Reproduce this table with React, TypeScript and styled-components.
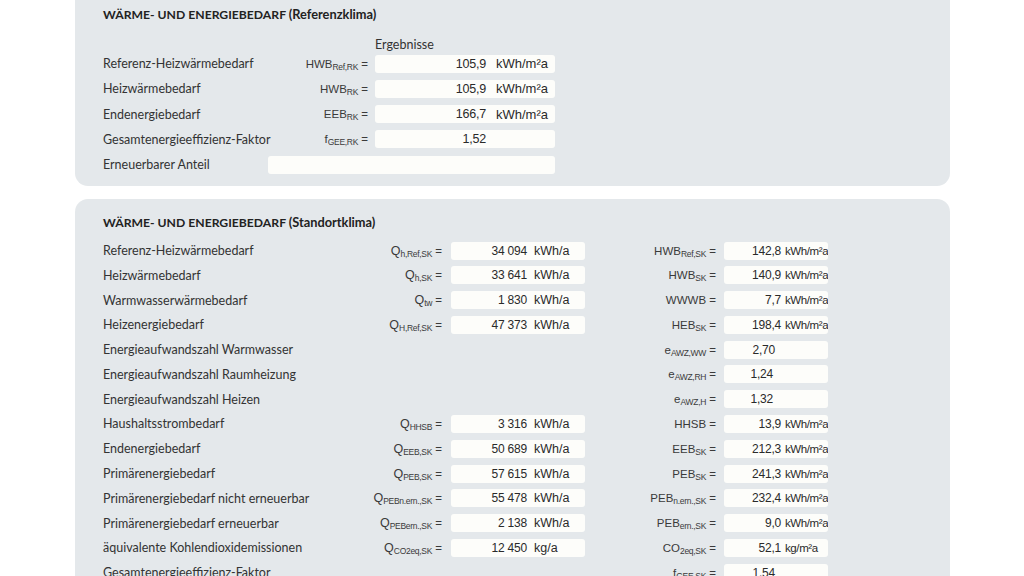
import React from "react";
import styled, { createGlobalStyle } from "styled-components";

const GlobalStyle = createGlobalStyle`
	html, body {
		margin: 0;
		padding: 0;
		background: #ffffff;
		overflow: hidden;
	}
	body {
		font-family: Lato, "Noto Sans", sans-serif;
		color: #2e2e2e;
	}
`;

const Page = styled.div`
	width: 1024px;
	height: 576px;
	overflow: hidden;
	display: flex;
	flex-direction: column;
	gap: 13px;
`;

const Panel = styled.section<{ $clippedTop?: boolean }>`
	margin-left: 75px;
	width: 875px;
	box-sizing: border-box;
	background: #e4e8eb;
	border-radius: ${(p) => (p.$clippedTop ? "0 0 13px 13px" : "13px 13px 0 0")};
	padding: ${(p) => (p.$clippedTop ? "7px 0 9px 28px" : "16px 0 0 28px")};
	flex-shrink: 0;
`;

const Title = styled.h2<{ $gap?: number }>`
	margin: 0 0 ${(p) => p.$gap ?? 0}px;
	height: 16px;
	font-family: Lato, "Noto Sans", sans-serif;
	font-size: 12.2px;
	line-height: 16px;
	font-weight: 700;
	color: #222;

	span {
		font-size: 12.8px;
		line-height: 1;
	}
`;

const ColumnHead = styled.div`
	margin: 15px 0 0 272px;
	height: 13px;
	line-height: 13px;
	font-size: 12.5px;
	color: #333;
`;

const RefRow = styled.div`
	display: grid;
	grid-template-columns: 158px 100px 180px;
	column-gap: 7px;
	align-items: center;
	height: 25.25px;
`;

const StdRow = styled.div`
	display: grid;
	grid-template-columns: 250px 98px 134px 139px 104px;
	align-items: center;
	height: 24.77px;
`;

const Label = styled.div`
	font-size: 12.5px;
	color: #333;
	white-space: nowrap;
`;

const Sym = styled.div<{ $pad?: number }>`
	text-align: right;
	padding-right: ${(p) => p.$pad ?? 0}px;
	font-family: "Liberation Sans", Arial, sans-serif;
	font-size: 11.5px;
	color: #3a3a3a;
	white-space: nowrap;

	b {
		font-weight: 400;
		font-size: 12.5px;
	}

	sub {
		font-size: 8.5px;
		vertical-align: -2px;
		line-height: 0;
		letter-spacing: -0.3px;
	}
`;

const Box = styled.div<{ $valueW: number; $gap: number; $span?: number }>`
	display: grid;
	grid-template-columns: ${(p) => p.$valueW}px 1fr;
	column-gap: ${(p) => p.$gap}px;
	align-items: center;
	height: 18px;
	background: #fdfdfa;
	border-radius: 3px;
	font-family: "Liberation Sans", Arial, sans-serif;
	color: #2a2a2a;
	overflow: hidden;
	${(p) => (p.$span ? `grid-column: span ${p.$span};` : "")}
`;

const Value = styled.span<{ $size: number }>`
	text-align: right;
	font-size: ${(p) => p.$size}px;
	letter-spacing: -0.2px;
	white-space: nowrap;
`;

const Unit = styled.span<{ $size: number; $tight?: boolean }>`
	font-size: ${(p) => p.$size}px;
	letter-spacing: ${(p) => (p.$tight ? "-0.4px" : "0")};
	white-space: nowrap;
`;

type Row = {
	label: string;
	sym?: React.ReactNode;
	value?: string;
	unit?: string;
};

type StdData = {
	label: string;
	qSym?: React.ReactNode;
	qValue?: string;
	qUnit?: string;
	sym?: React.ReactNode;
	value?: string;
	unit?: string;
	shift?: number;
};

const s = (base: string, sub?: string) => (
	<>
		{base}
		{sub && <sub>{sub}</sub>} =
	</>
);

// Q symbols are drawn a little larger than the rest
const q = (sub: string) => (
	<>
		<b>Q</b>
		<sub>{sub}</sub> =
	</>
);

const refRows: Row[] = [
	{ label: "Referenz-Heizwärmebedarf", sym: s("HWB", "Ref,RK"), value: "105,9", unit: "kWh/m²a" },
	{ label: "Heizwärmebedarf", sym: s("HWB", "RK"), value: "105,9", unit: "kWh/m²a" },
	{ label: "Endenergiebedarf", sym: s("EEB", "RK"), value: "166,7", unit: "kWh/m²a" },
	{ label: "Gesamtenergieeffizienz-Faktor", sym: s("f", "GEE,RK"), value: "1,52" },
];

const stdRows: StdData[] = [
	{ label: "Referenz-Heizwärmebedarf", qSym: q("h,Ref,SK"), qValue: "34 094", qUnit: "kWh/a", sym: s("HWB", "Ref,SK"), value: "142,8", unit: "kWh/m²a" },
	{ label: "Heizwärmebedarf", qSym: q("h,SK"), qValue: "33 641", qUnit: "kWh/a", sym: s("HWB", "SK"), value: "140,9", unit: "kWh/m²a" },
	{ label: "Warmwasserwärmebedarf", qSym: q("tw"), qValue: "1 830", qUnit: "kWh/a", sym: s("WWWB"), value: "7,7", unit: "kWh/m²a" },
	{ label: "Heizenergiebedarf", qSym: q("H,Ref,SK"), qValue: "47 373", qUnit: "kWh/a", sym: s("HEB", "SK"), value: "198,4", unit: "kWh/m²a" },
	{ label: "Energieaufwandszahl Warmwasser", sym: s("e", "AWZ,WW"), value: "2,70", shift: 6 },
	{ label: "Energieaufwandszahl Raumheizung", sym: s("e", "AWZ,RH"), value: "1,24", shift: 8 },
	{ label: "Energieaufwandszahl Heizen", sym: s("e", "AWZ,H"), value: "1,32", shift: 8 },
	{ label: "Haushaltsstrombedarf", qSym: q("HHSB"), qValue: "3 316", qUnit: "kWh/a", sym: s("HHSB"), value: "13,9", unit: "kWh/m²a" },
	{ label: "Endenergiebedarf", qSym: q("EEB,SK"), qValue: "50 689", qUnit: "kWh/a", sym: s("EEB", "SK"), value: "212,3", unit: "kWh/m²a" },
	{ label: "Primärenergiebedarf", qSym: q("PEB,SK"), qValue: "57 615", qUnit: "kWh/a", sym: s("PEB", "SK"), value: "241,3", unit: "kWh/m²a" },
	{ label: "Primärenergiebedarf nicht erneuerbar", qSym: q("PEBn.ern.,SK"), qValue: "55 478", qUnit: "kWh/a", sym: s("PEB", "n.ern.,SK"), value: "232,4", unit: "kWh/m²a" },
	{ label: "Primärenergiebedarf erneuerbar", qSym: q("PEBern.,SK"), qValue: "2 138", qUnit: "kWh/a", sym: s("PEB", "ern.,SK"), value: "9,0", unit: "kWh/m²a" },
	{ label: "äquivalente Kohlendioxidemissionen", qSym: q("CO2eq,SK"), qValue: "12 450", qUnit: "kg/a", sym: s("CO", "2eq,SK"), value: "52,1", unit: "kg/m²a" },
	{ label: "Gesamtenergieeffizienz-Faktor", sym: s("f", "GEE,SK"), value: "1,54", shift: 6 },
];

const App = () => {
	return (
		<Page>
			<GlobalStyle />
			<Panel $clippedTop>
				<Title>
					WÄRME- UND ENERGIEBEDARF <span>(Referenzklima)</span>
				</Title>
				<ColumnHead>Ergebnisse</ColumnHead>
				{refRows.map((r) => (
					<RefRow key={r.label}>
						<Label>{r.label}</Label>
						<Sym>{r.sym}</Sym>
						<Box $valueW={111} $gap={10}>
							<Value $size={12.5}>{r.value}</Value>
							<Unit $size={13}>{r.unit}</Unit>
						</Box>
					</RefRow>
				))}
				<RefRow>
					<Label>Erneuerbarer Anteil</Label>
					<Box $valueW={111} $gap={10} $span={2} />
				</RefRow>
			</Panel>

			<Panel>
				<Title $gap={7}>
					WÄRME- UND ENERGIEBEDARF <span>(Standortklima)</span>
				</Title>
				{stdRows.map((r) => (
					<StdRow key={r.label}>
						<Label>{r.label}</Label>
						<Sym $pad={9}>{r.qSym}</Sym>
						{r.qValue ? (
							<Box $valueW={76} $gap={7}>
								<Value $size={12}>{r.qValue}</Value>
								<Unit $size={12.5}>{r.qUnit}</Unit>
							</Box>
						) : (
							<div />
						)}
						<Sym $pad={8}>{r.sym}</Sym>
						<Box $valueW={57 - (r.shift ?? 0)} $gap={4}>
							<Value $size={12}>{r.value}</Value>
							<Unit $size={11.5} $tight>
								{r.unit}
							</Unit>
						</Box>
					</StdRow>
				))}
			</Panel>
		</Page>
	);
};

export default App;
